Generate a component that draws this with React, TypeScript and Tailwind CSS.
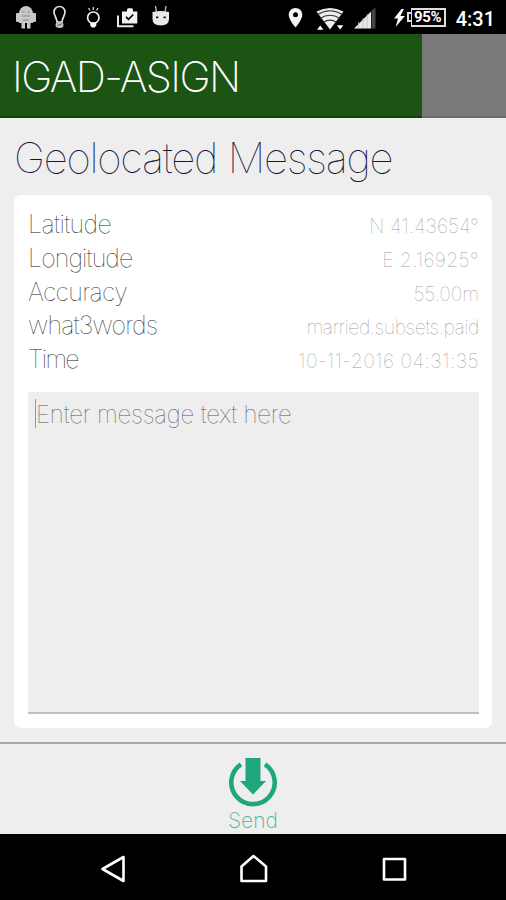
import React from 'react';

interface Reading {
  label: string;
  value: string;
  labelClass: string;
  valueClass: string;
}

const readings: Reading[] = [
  { label: 'Latitude', value: 'N 41.43654°', labelClass: 'tracking-[-0.6px]', valueClass: 'tracking-[0.05px]' },
  { label: 'Longitude', value: 'E 2.16925°', labelClass: 'tracking-[-0.9px]', valueClass: 'tracking-[0.3px]' },
  { label: 'Accuracy', value: '55.00m', labelClass: 'tracking-[-0.7px]', valueClass: 'tracking-[-0.1px]' },
  { label: 'what3words', value: 'married.subsets.paid', labelClass: 'tracking-[-0.8px]', valueClass: 'tracking-[-0.45px]' },
  { label: 'Time', value: '10-11-2016 04:31:35', labelClass: 'tracking-[-1.7px]', valueClass: 'tracking-[0.5px]' },
];

const NotificationIcons = () => (
  <svg width="180" height="34" viewBox="0 0 180 34" fill="none">
    {/* debug robot */}
    <g fill="#c8c8c8">
      <path d="M19 14a7 8 0 0 1 14 0v9H19z" />
      <rect x="16" y="13" width="4" height="9" rx="1" />
      <rect x="32" y="13" width="4" height="9" rx="1" />
      <rect x="21.500" y="23" width="3.500" height="5.500" />
      <rect x="27" y="23" width="3.500" height="5.500" />
    </g>
    <path d="M22 12h2.500M27.500 12H30M22 16h8M23 20h6" stroke="#999" strokeWidth="1.300" />
    {/* bulb */}
    <path d="M57 22c0-4-3-6-3-10a5.500 5.500 0 0 1 11 0c0 4-3 6-3 10z" stroke="#e0e0e0" strokeWidth="1.700" />
    <ellipse cx="59.500" cy="25" rx="4" ry="3" fill="#c4c4c4" />
    <path d="M57.500 25.500l4-1.500" stroke="#555" strokeWidth="1" />
    {/* small glowing bulb */}
    <circle cx="93.300" cy="17.700" r="5.700" stroke="#eee" strokeWidth="1.700" />
    <path d="M90.300 22.500h6v3l-1.600 2h-2.800l-1.600-2z" fill="#fff" />
    <path d="M93.300 7v3M88.700 8l1.200 2.500M97.900 8l-1.200 2.500" stroke="#ccc" strokeWidth="1.400" />
    {/* checked case */}
    <path d="M122 11.500h5V9.800q0-1.500 1.500-1.500h3q1.500 0 1.500 1.500v1.700h4.300v12H122z" fill="#f2f2f2" />
    <path d="M118 15.500v10.700h15.500" stroke="#e8e8e8" strokeWidth="2" />
    <path d="M126 16.800l2.500 2.500 4.800-4.800" stroke="#000" strokeWidth="1.700" />
    {/* robot head */}
    <path d="M152.500 12q8.300-2 16.500 0v7q0 6.500-8.200 6.500t-8.300-6.500z" fill="#e8e8e8" />
    <path d="M156.500 12l-1-6M165 12l1-6" stroke="#bbb" strokeWidth="1.400" />
    <path d="M156 17.300h2.300M163.500 17.300h2.300" stroke="#111" strokeWidth="1.800" />
  </svg>
);

const SystemIcons = () => (
  <svg width="125" height="34" viewBox="282 0 125 34" fill="none">
    <path
      d="M295.500 8c-4 0-6.800 3-6.800 6.800 0 4.800 6.800 12.700 6.800 12.700s6.800-7.900 6.800-12.700C302.300 11 299.500 8 295.500 8z"
      fill="#f5f5f5"
    />
    <circle cx="295.500" cy="14.700" r="2.500" fill="#000" />
    {/* wifi with traffic arrows */}
    <path d="M316.500 11.500Q330 4.500 343.500 11.500L330 29.500z" fill="#eee" />
    <path d="M317.500 14.500Q330 7 342.500 14.500M320 18.500Q330 12 340 18.500M323.500 22.300Q330 18 336.500 22.300" stroke="#333" strokeWidth="1.100" />
    <path d="M317 29.800l3.200-4.300 3.200 4.300zM337 25.300h6.400l-3.200 4.300z" fill="#fff" />
    {/* signal */}
    <path d="M354 28.500l17-17v17z" fill="#e8e8e8" />
    <path d="M358.500 22v6M363 18v10M367.200 14v14" stroke="#bbb" strokeWidth="0.800" />
    <path d="M371.500 10.500L375.500 8v20.500h-4z" fill="#444" />
    <path d="M401.500 9L394 18.500h4l-2.400 8.500 9.300-11h-4.500l3.500-7z" fill="#fff" />
  </svg>
);

const StatusBar = () => (
  <div className="h-[34px] bg-black flex items-center text-white">
    <NotificationIcons />
    <div className="ml-auto flex items-center">
      <SystemIcons />
      <div className="flex items-center">
        <div className="w-[4px] h-[10px] border-y-2 border-l-2 border-[#ddd]" />
        <div className="w-[35px] h-[19px] border-2 border-l border-[#ddd] flex items-center justify-center font-[Roboto] font-bold text-[15px] leading-none tracking-[-0.3px]">
          95%
        </div>
      </div>
      <div className="mt-[3px] ml-[10px] mr-[11px] font-[Roboto] font-medium text-[20px] leading-none">4:31</div>
    </div>
  </div>
);

const SendButton = () => (
  <button className="flex flex-col items-center w-[90px] pt-[12px]">
    <svg width="50" height="52" viewBox="0 0 50 52" fill="none">
      <path d="M13 8.300A21.700 21.700 0 1 0 37 8.300" stroke="#20a67e" strokeWidth="4.600" />
      <path d="M17.500 2h15v23h5.500L25 38.500 12 25h5.500z" fill="#20a67e" />
    </svg>
    <span className="text-[21px] leading-[25px] font-extralight text-[#20a67e]/80">Send</span>
  </button>
);

const NavBar = () => (
  <div className="h-[66px] bg-black">
    <svg width="506" height="66" viewBox="0 834 506 66" fill="none" stroke="#fff" strokeWidth="2.600" strokeLinejoin="round">
      <path d="M102.500 869L123.500 857v24z" />
      <path d="M241.500 881v-14.500l12-10.500 12.500 10.500V881z" />
      <rect x="384" y="859" width="21" height="20.500" />
    </svg>
  </div>
);

const App: React.FC = () => {
  return (
    <div className="w-[506px] h-[900px] bg-[#eeeeee] flex flex-col overflow-hidden font-['Inter',sans-serif]">
      <StatusBar />

      <header className="h-[84px] flex">
        <div className="w-[422px] bg-[#1c5414] border-b-2 border-[#154010] pl-[12px] pt-[4px] flex items-center">
          <h1 className="text-[42px] leading-none font-extralight text-white tracking-[-1.6px] whitespace-nowrap">IGAD-ASIGN</h1>
        </div>
        <div className="flex-1 bg-[#7a7a7a] border-b-2 border-[#6b6b6b]" />
      </header>

      <main className="flex-1 px-[14px] flex flex-col">
        <h2 className="h-[77px] pt-px flex items-center text-[42px] font-thin text-[#14143c] tracking-[-1.28px] whitespace-nowrap">
          Geolocated Message
        </h2>
        <section className="h-[533px] bg-white rounded-[7px] pl-[14px] pr-[13px] pt-[13px] pb-[14px] flex flex-col">
          {readings.map(item => (
            <div key={item.label} className="h-[33.75px] flex items-baseline justify-between whitespace-nowrap">
              <span className={`text-[25px] leading-[33px] font-thin text-[#222] ${item.labelClass}`}>{item.label}</span>
              <span className={`text-[19.5px] font-thin text-[#999] ${item.valueClass}`}>{item.value}</span>
            </div>
          ))}
          <div className="mt-[15px] flex-1 bg-[#eeeeee] border-b-2 border-[#c0c0c0] pl-[7px] pt-[7px] flex items-start">
            <div className="w-px h-[29px] bg-[#999]" />
            <span className="pt-px text-[24px] leading-[30px] font-thin text-[#555] tracking-[-0.18px] whitespace-nowrap">
              Enter message text here
            </span>
          </div>
        </section>
      </main>

      <footer className="h-[92px] border-t-2 border-[#a8a8a8] flex justify-center">
        <SendButton />
      </footer>
      <NavBar />
    </div>
  );
};

export default App;
